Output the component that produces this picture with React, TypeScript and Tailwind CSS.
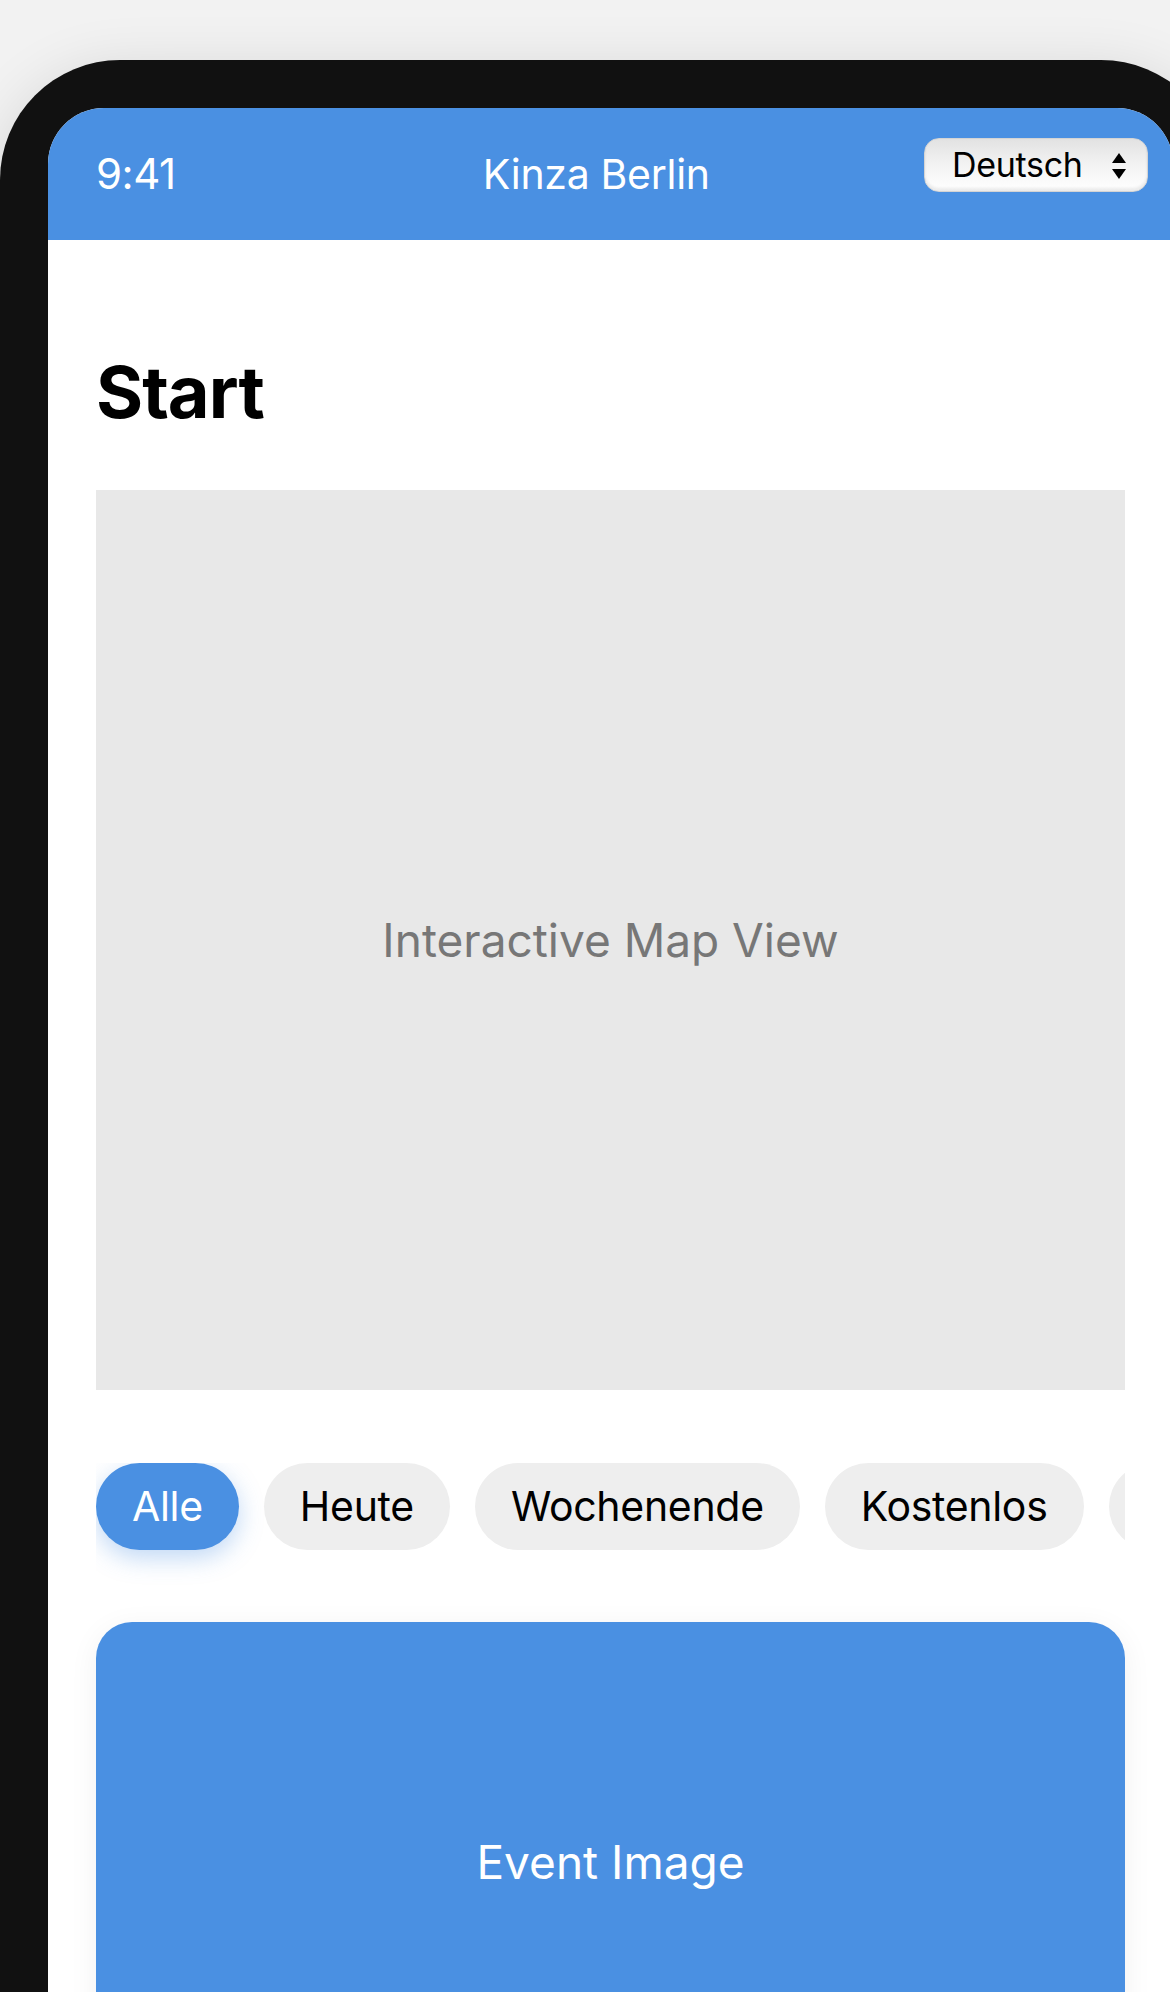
import React from "react";

const filters = ["Alle", "Heute", "Wochenende", "Kostenlos", "Kinder"];

function LanguageSelect() {
  return (
    <div className="absolute top-[30px] right-[25px] flex h-[54px] w-[224px] items-center justify-between rounded-[15px] border border-[#d4d4d4] bg-gradient-to-b from-[#e2e2e2] via-[#f3f3f3] to-white pl-[27px] pr-[20px] shadow-[inset_0_-3px_3px_rgba(0,0,0,0.08)]">
      <span className="text-[34px] leading-none tracking-[-0.3px] text-black">Deutsch</span>
      <svg width="16" height="30" viewBox="0 0 16 30" className="mt-[2px]">
        <path d="M8 2 L15 12 L1 12 Z" fill="#000" />
        <path d="M1 18 L15 18 L8 28 Z" fill="#000" />
      </svg>
    </div>
  );
}

export default function App() {
  return (
    <div className="h-[1992px] w-[1170px] overflow-hidden bg-[#f2f2f2] pt-[60px] font-['Inter','Noto_Sans',sans-serif]">
      <div className="w-[1221px] rounded-[120px] bg-[#111111] p-[48px] shadow-[0_10px_60px_rgba(0,0,0,0.12)]">
        <div className="h-[2000px] overflow-hidden rounded-[56px] bg-white">
          {/* status / header */}
          <header className="relative flex h-[132px] items-center justify-between bg-[#4a90e2] px-[48px] text-white">
            <span className="text-[42px] leading-none tracking-[-0.5px]">9:41</span>
            <span className="text-[41px] leading-none tracking-[-0.3px]">Kinza Berlin</span>
            <div className="w-[108px]" />
            <LanguageSelect />
          </header>

          <main className="px-[48px] pt-[116px]">
            <h1 className="mb-[62px] text-[72px] font-bold leading-none tracking-[-1px] text-black">Start</h1>

            <div className="flex h-[900px] items-center justify-center bg-[#e8e8e8]">
              <span className="text-[46px] text-[#777777]">Interactive Map View</span>
            </div>

            <div className="mt-[73px] flex gap-[25px] overflow-hidden pb-[40px]">
              {filters.map((f, i) => (
                <button
                  key={f}
                  className={
                    i === 0
                      ? "flex h-[87px] shrink-0 items-center rounded-full bg-[#4a90e2] px-[36px] text-[41px] tracking-[-0.3px] text-white shadow-[0_8px_24px_rgba(74,144,226,0.35)]"
                      : "flex h-[87px] shrink-0 items-center rounded-full bg-[#eeeeee] px-[36px] text-[41px] tracking-[-0.3px] text-black"
                  }
                >
                  {f}
                </button>
              ))}
            </div>

            <div className="mt-[32px] overflow-hidden rounded-[36px] bg-white shadow-[0_6px_30px_rgba(0,0,0,0.06)]">
              <div className="flex h-[480px] items-center justify-center bg-[#4a90e2]">
                <span className="text-[46px] text-white">Event Image</span>
              </div>
            </div>
          </main>
        </div>
      </div>
    </div>
  );
}
